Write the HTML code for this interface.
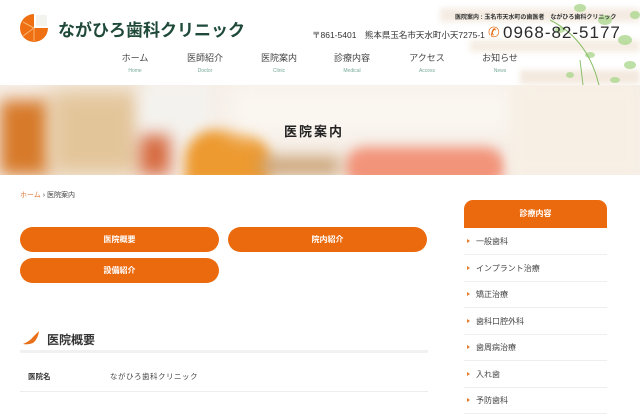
<!DOCTYPE html>
<html><head><meta charset="utf-8">
<style>
*{margin:0;padding:0;box-sizing:border-box}
body{width:640px;height:400px;overflow:hidden;background:#fff;font-family:"Liberation Sans","Noto Sans CJK JP",sans-serif;color:#333;position:relative}
.a{position:absolute;white-space:nowrap}
.nav{position:absolute;top:52px;text-align:center;width:70px;margin-left:-35px}
.nav b{display:block;font-weight:normal;font-size:9px;color:#444;line-height:12px}
.nav i{display:block;font-style:normal;font-size:5px;color:#7a9;line-height:8px;margin-top:3px}
.btn{position:absolute;height:25px;border-radius:13px;background:#eb6a0e;color:#fff;font-size:8px;font-weight:bold;text-align:center;line-height:25px;width:199px}
.si{position:absolute;left:464px;width:143px;height:27px;border-bottom:1px solid #eee;font-size:8px;color:#444;line-height:27px;padding-left:12px}
.si:before{content:"";position:absolute;left:3px;top:11px;border-left:3px solid #e87a2a;border-top:2.5px solid transparent;border-bottom:2.5px solid transparent}
</style></head><body>
<div class="a" style="left:430px;top:0;width:210px;height:180px;overflow:hidden">
 <div class="a" style="left:10px;top:8px;width:200px;height:14px;background:#f4ece2;filter:blur(3px)"></div>
 <div class="a" style="left:40px;top:40px;width:170px;height:12px;background:#f5ede3;filter:blur(3px)"></div>
 <div class="a" style="left:90px;top:70px;width:120px;height:14px;background:#f3e9de;filter:blur(3px)"></div>
 <svg class="a" style="left:0;top:0" width="210" height="180">
  <g fill="#a8d68a" opacity=".75">
   <ellipse cx="150" cy="8" rx="6" ry="4"/><ellipse cx="175" cy="20" rx="7" ry="5"/><ellipse cx="195" cy="40" rx="7" ry="5"/>
   <ellipse cx="130" cy="30" rx="5" ry="3"/><ellipse cx="200" cy="65" rx="6" ry="4"/><ellipse cx="160" cy="55" rx="5" ry="3"/>
   <ellipse cx="185" cy="80" rx="5" ry="3"/><ellipse cx="140" cy="75" rx="4" ry="3"/><ellipse cx="205" cy="15" rx="5" ry="4"/>
   <ellipse cx="175" cy="95" rx="3" ry="3"/><ellipse cx="150" cy="100" rx="3" ry="3"/><ellipse cx="152" cy="125" rx="3" ry="3"/>
   <ellipse cx="158" cy="140" rx="3" ry="3"/><ellipse cx="162" cy="110" rx="3" ry="3"/>
  </g>
  <path d="M120 20 Q160 40 170 90 M150 60 Q155 100 160 150" stroke="#8bbf6a" fill="none" stroke-width="1"/>
 </svg>
</div>
<svg class="a" style="left:19px;top:12px" width="30" height="32"><path d="M15 16 L15 2 A14 14 0 1 0 29 16 Z" fill="#ee7012"/><rect x="17" y="3" width="11" height="11" fill="#f4f4ee"/><path d="M15 16 L4 10 M15 16 L4 24 M15 16 L15 29" stroke="#fbb572" stroke-width="1"/></svg>
<div class="a" style="left:58px;top:16px;font-size:17px;font-weight:bold;color:#1f4a3a">ながひろ歯科クリニック</div>
<div class="a" style="left:455px;top:12px;font-size:6px;font-weight:bold;color:#333">医院案内 : 玉名市天水町の歯医者　ながひろ歯科クリニック</div>
<div class="a" style="left:312px;top:29px;font-size:8.5px;color:#333">〒861-5401　熊本県玉名市天水町小天7275-1</div>
<div class="a" style="left:488px;top:24px;font-size:14px;color:#e46a10">&#9990;</div>
<div class="a" style="left:503px;top:23px;font-size:17px;color:#2a2a2a;letter-spacing:1px">0968-82-5177</div>
<div class="nav" style="left:135px"><b>ホーム</b><i>Home</i></div>
<div class="nav" style="left:205px"><b>医師紹介</b><i>Doctor</i></div>
<div class="nav" style="left:279px"><b>医院案内</b><i>Clinic</i></div>
<div class="nav" style="left:352px"><b>診療内容</b><i>Medical</i></div>
<div class="nav" style="left:427px"><b>アクセス</b><i>Access</i></div>
<div class="nav" style="left:500px"><b>お知らせ</b><i>News</i></div>
<div class="a" style="left:0;top:85px;width:640px;height:90px;overflow:hidden;background:#f6efe8">
 <div class="a" style="left:0;top:15px;width:50px;height:75px;background:#d77a2a;filter:blur(8px)"></div>
 <div class="a" style="left:50px;top:5px;width:90px;height:85px;background:#e3c59a;filter:blur(10px)"></div>
 <div class="a" style="left:140px;top:0;width:70px;height:60px;background:#f4f2ee;filter:blur(8px)"></div>
 <div class="a" style="left:140px;top:50px;width:30px;height:40px;background:#d66a40;filter:blur(8px)"></div>
 <div class="a" style="left:185px;top:45px;width:85px;height:55px;border-radius:30px 30px 0 0;background:#ed9a30;filter:blur(6px)"></div>
 <div class="a" style="left:230px;top:0;width:300px;height:50px;background:#faf6f0;filter:blur(10px)"></div>
 <div class="a" style="left:345px;top:62px;width:160px;height:40px;border-radius:20px;background:#f2947a;filter:blur(6px)"></div>
 <div class="a" style="left:260px;top:72px;width:80px;height:18px;background:#c9a072;filter:blur(8px)"></div>
 <div class="a" style="left:510px;top:0;width:130px;height:90px;background:#f7efe4;filter:blur(6px)"></div>
</div>
<div class="a" style="left:284px;top:121px;font-size:13px;font-weight:bold;color:#222;letter-spacing:2px">医院案内</div>
<div class="a" style="left:20px;top:190px;font-size:7px;color:#444"><span style="color:#e07a3a">ホーム</span> › 医院案内</div>
<div class="btn" style="left:20px;top:227px">医院概要</div>
<div class="btn" style="left:228px;top:227px">院内紹介</div>
<div class="btn" style="left:20px;top:258px">設備紹介</div>
<svg class="a" style="left:22px;top:330px" width="18" height="15"><path d="M1 14 Q8 11 11 7 Q14 4 17 1 Q16 9 11 13 Q6 15 1 14 Z" fill="#e8701a"/></svg>
<div class="a" style="left:47px;top:331px;font-size:12px;font-weight:bold;color:#333">医院概要</div>
<div class="a" style="left:20px;top:350px;width:408px;height:3px;background:#f1f1f1"></div>
<div class="a" style="left:28px;top:371px;font-size:7.5px;font-weight:bold;color:#333">医院名</div>
<div class="a" style="left:110px;top:371px;font-size:7.5px;color:#444;letter-spacing:.5px">ながひろ歯科クリニック</div>
<div class="a" style="left:20px;top:391px;width:408px;height:1px;background:#eee"></div>
<div class="a" style="left:464px;top:200px;width:143px;height:28px;background:#eb6a0e;border-radius:9px 9px 0 0;color:#fff;font-size:8px;font-weight:bold;text-align:center;line-height:28px">診療内容</div>
<div class="si" style="top:228px">一般歯科</div>
<div class="si" style="top:255px">インプラント治療</div>
<div class="si" style="top:281px">矯正治療</div>
<div class="si" style="top:308px">歯科口腔外科</div>
<div class="si" style="top:334px">歯周病治療</div>
<div class="si" style="top:361px">入れ歯</div>
<div class="si" style="top:387px">予防歯科</div>
</body></html>
